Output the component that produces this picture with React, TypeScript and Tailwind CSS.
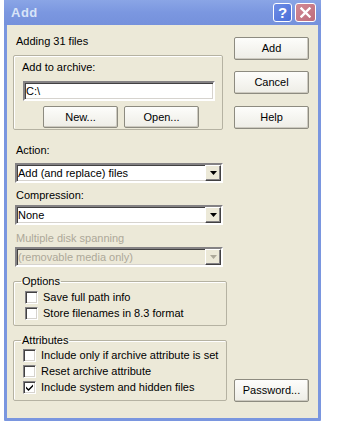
import React from 'react';

const sunken =
  'border-2 border-t-[#848284] border-l-[#848284] border-r-white border-b-white shadow-[inset_1px_1px_0_#424142,inset_-1px_-1px_0_#d6d3ce]';

function Button({ children, className = '' }: { children: React.ReactNode; className?: string }) {
  return (
    <div
      className={`flex items-center justify-center rounded-[2px] border border-[#8d8b80] bg-gradient-to-b from-[#fdfdfb] to-[#eeede6] shadow-[inset_-1px_-1px_0_#cdcac0] ${className}`}
    >
      {children}
    </div>
  );
}

function Arrow({ disabled }: { disabled?: boolean }) {
  return (
    <div className="w-4 h-4 flex items-center justify-center bg-[#ece9d8] border border-t-white border-l-white border-r-[#424142] border-b-[#424142] shadow-[inset_-1px_-1px_0_#848284]">
      <svg width="7" height="4" viewBox="0 0 7 4">
        <path d="M0 0h7L3.5 4z" fill={disabled ? '#aca899' : '#000'} />
      </svg>
    </div>
  );
}

function Combo({ value, disabled }: { value: string; disabled?: boolean }) {
  return (
    <div className={`h-[20px] w-[208px] ml-[2px] flex items-center ${sunken} ${disabled ? 'bg-[#ece9d8] text-[#aca899]' : 'bg-white'}`}>
      <span className="flex-1 pl-[1px] leading-[13px]">{value}</span>
      <Arrow disabled={disabled} />
    </div>
  );
}

function Check({ label, checked }: { label: string; checked?: boolean }) {
  return (
    <div className="h-[16px] flex items-center gap-[5px]">
      <div className="w-[13px] h-[13px] bg-white border border-t-[#848284] border-l-[#848284] border-r-white border-b-white shadow-[inset_1px_1px_0_#424142,inset_-1px_-1px_0_#d6d3ce] flex items-center justify-center">
        {checked && (
          <svg width="7" height="7" viewBox="0 0 7 7">
            <path d="M0 2.5l2.5 2.5L7 0.5v2L2.5 7 0 4.5z" fill="#000" />
          </svg>
        )}
      </div>
      <span className="leading-[13px]">{label}</span>
    </div>
  );
}

function Group({ title, children, className = '' }: { title: string; children: React.ReactNode; className?: string }) {
  return (
    <fieldset className={`border border-[#b5b2a2] rounded-[2px] shadow-[inset_1px_1px_0_#fff] px-0 w-[214px] ${className}`}>
      <legend className="ml-[7px] px-[1px] leading-[13px]">{title}</legend>
      {children}
    </fieldset>
  );
}

export default function App() {
  return (
    <div className="w-[341px] h-[431px] bg-white font-['Liberation_Sans',Arial,sans-serif] text-[11px] text-black">
      <div className="ml-1 w-[317px] h-[421px] flex flex-col bg-[#7a96df] rounded-b-[1px]">
        <div className="h-[25px] flex items-center bg-gradient-to-b from-[#8aa5e6] via-[#7b97e0] to-[#7591dc]">
          <span className="ml-[7px] font-bold text-[13px] text-[#d8e4f8] tracking-[0.5px]">Add</span>
          <div className="ml-auto flex gap-[3px] mr-[5px]">
            <div className="w-[19px] h-[19px] rounded-[3px] border border-white bg-gradient-to-br from-[#6f8ee6] to-[#4b6ed8] flex items-center justify-center text-white font-bold text-[15px] leading-none">
              ?
            </div>
            <div className="w-[21px] h-[19px] rounded-[3px] border border-white bg-gradient-to-br from-[#d28a95] to-[#bd6c7c] flex items-center justify-center">
              <svg width="11" height="11" viewBox="0 0 11 11">
                <path d="M1.5 1.5l8 8M9.5 1.5l-8 8" stroke="#fff" strokeWidth="2.4" strokeLinecap="square" />
              </svg>
            </div>
          </div>
        </div>

        <div className="flex-1 mx-[3px] mb-[3px] bg-[#ece9d8] flex">
          <div className="ml-[6px] w-[214px] flex flex-col pt-[10px]">
            <div className="pl-[3px] leading-[13px]">Adding 31 files</div>

            <div className="mt-[7px] w-[210px] h-[75px] border border-[#b5b2a2] rounded-[2px] shadow-[inset_1px_1px_0_#fff] flex flex-col">
              <div className="mt-[5px] ml-[8px] leading-[13px]">Add to archive:</div>
              <div className={`mt-[7px] ml-[9px] w-[192px] h-[20px] bg-white flex items-center pl-[1px] leading-[13px] ${sunken}`}>
                C:\
              </div>
              <div className="mt-[5px] ml-[29px] flex gap-[6px]">
                <Button className="w-[75px] h-[22px]">New...</Button>
                <Button className="w-[75px] h-[22px]">Open...</Button>
              </div>
            </div>

            <div className="mt-[14px] pl-[3px] leading-[13px]">Action:</div>
            <div className="mt-[6px]">
              <Combo value="Add (and replace) files" />
            </div>
            <div className="mt-[6px] pl-[3px] leading-[13px]">Compression:</div>
            <div className="mt-[3px]">
              <Combo value="None" />
            </div>
            <div className="mt-[7px] pl-[3px] leading-[13px] text-[#aca899]">Multiple disk spanning</div>
            <div className="mt-[2px]">
              <Combo value="(removable media only)" disabled />
            </div>

            <Group title="Options" className="mt-[8px] pb-[4px]">
              <div className="pl-[11px] pt-[1px]">
                <Check label="Save full path info" />
                <Check label="Store filenames in 8.3 format" />
              </div>
            </Group>

            <Group title="Attributes" className="mt-[8px] pb-[5px]">
              <div className="pl-[9px]">
                <Check label="Include only if archive attribute is set" />
                <Check label="Reset archive attribute" />
                <Check label="Include system and hidden files" checked />
              </div>
            </Group>
          </div>

          <div className="ml-[7px] w-[75px] flex flex-col">
            <Button className="mt-[12px] h-[23px]">Add</Button>
            <Button className="mt-[11px] h-[23px]">Cancel</Button>
            <Button className="mt-[12px] h-[23px]">Help</Button>
            <Button className="mt-auto mb-[16px] h-[23px]">Password...</Button>
          </div>
        </div>
      </div>
    </div>
  );
}
